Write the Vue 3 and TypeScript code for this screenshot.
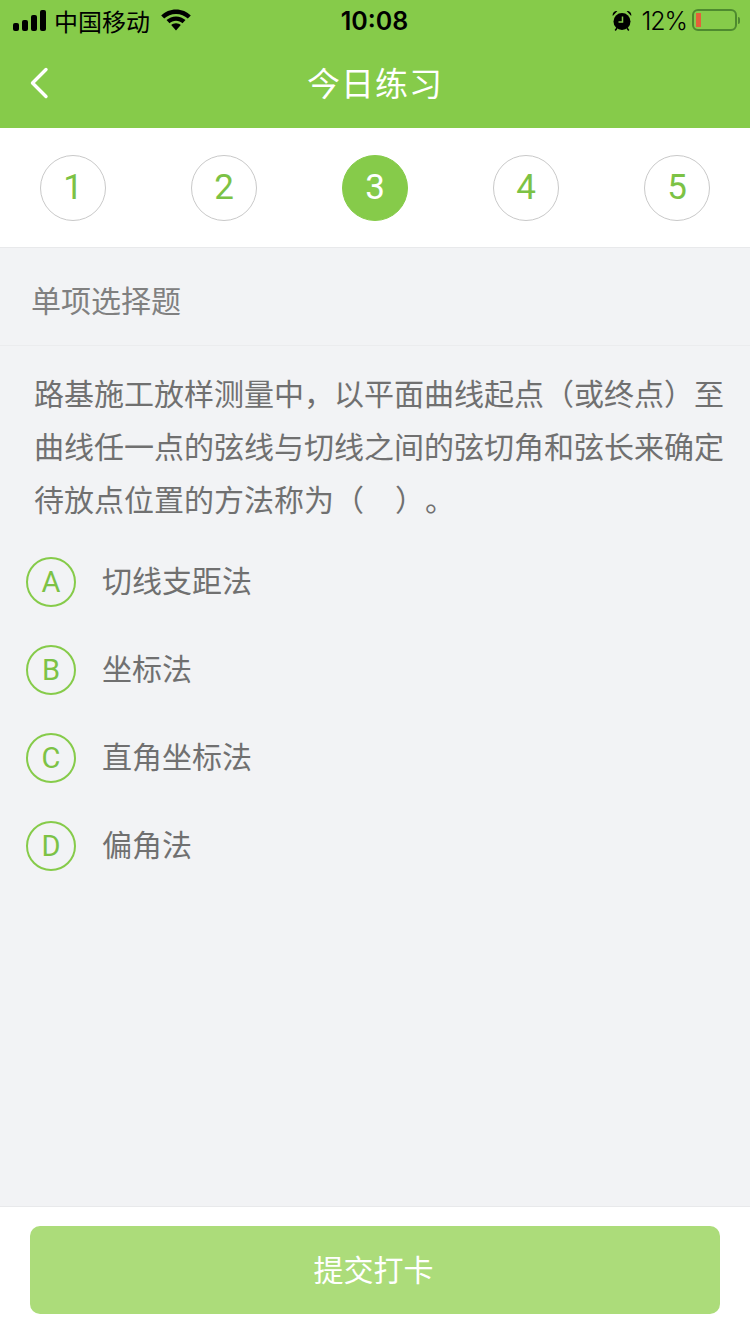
<script setup lang="ts">
const steps = [1, 2, 3, 4, 5]
const current = 3

const options = [
  { key: 'A', text: '切线支距法' },
  { key: 'B', text: '坐标法' },
  { key: 'C', text: '直角坐标法' },
  { key: 'D', text: '偏角法' }
]
</script>

<template>
  <div class="page">
    <header class="header">
      <div class="status-bar">
        <div class="status-left">
          <span class="signal"><i></i><i></i><i></i><i></i></span>
          <span class="carrier">中国移动</span>
          <svg class="wifi" width="30" height="22" viewBox="0 0 30 22">
            <path d="M15 .5C9.200.5 4 2.800.2 6.500l3 3.100C6.200 6.700 10.400 4.900 15 4.900s8.800 1.800 11.800 4.700l3-3.100C26 2.800 20.800.5 15 .5z" fill="#000" />
            <path d="M15 7.400c-3.700 0-7 1.400-9.500 3.700l3 3.100c1.700-1.600 4-2.500 6.500-2.500s4.800.9 6.500 2.500l3-3.100C22 8.800 18.700 7.400 15 7.400z" fill="#000" />
            <path d="M15 14.200c-1.900 0-3.500.7-4.800 1.900L15 21.500l4.800-5.400c-1.300-1.200-2.900-1.900-4.800-1.900z" fill="#000" />
          </svg>
        </div>
        <span class="time">10:08</span>
        <div class="status-right">
          <svg class="alarm" width="20" height="21" viewBox="0 0 20 21">
            <circle cx="10" cy="11.500" r="8.500" fill="#000" />
            <path d="M10.500 6.500v5.500H6.500" fill="none" stroke="#86cb4a" stroke-width="1.500" />
            <path d="M.8 6C.2 3 2.300.6 5.400 1zM19.200 6c.6-3-1.500-5.400-4.600-5z" fill="#000" />
            <path d="M5 18l-1.800 2.500M15 18l1.800 2.500" stroke="#000" stroke-width="1.500" />
          </svg>
          <span class="percent">12%</span>
          <span class="battery"><i class="level"></i></span>
          <span class="battery-cap"></span>
        </div>
      </div>
      <div class="nav-bar">
        <svg class="back" width="20" height="32" viewBox="0 0 20 32">
          <path d="M17 2.500 3.500 16 17 29.500" fill="none" stroke="#fff" stroke-width="3.400" stroke-linecap="round" stroke-linejoin="round" />
        </svg>
        <h1 class="title">今日练习</h1>
      </div>
    </header>

    <section class="steps">
      <div v-for="step in steps" :key="step" class="step" :class="{ active: step === current }">{{ step }}</div>
    </section>

    <main class="content">
      <div class="type">单项选择题</div>
      <p class="question">路基施工放样测量中，以平面曲线起点（或终点）至曲线任一点的弦线与切线之间的弦切角和弦长来确定待放点位置的方法称为（<span class="blank"></span>）。</p>
      <ul class="options">
        <li v-for="item in options" :key="item.key" class="option">
          <span class="letter">{{ item.key }}</span>
          <span class="option-text">{{ item.text }}</span>
        </li>
      </ul>
    </main>

    <footer class="footer">
      <button class="submit"><span class="submit-text">提交打卡</span></button>
    </footer>
  </div>
</template>

<style>
html,
body {
  margin: 0;
  background: #f2f3f5;
}
</style>

<style scoped>
.page {
  display: flex;
  flex-direction: column;
  width: 750px;
  height: 1334px;
  overflow: hidden;
  background: #f2f3f5;
  font-family: "Liberation Sans", "Noto Sans CJK SC", sans-serif;
}

.header {
  flex: none;
  height: 128px;
  background: #86cb4a;
}

.status-bar {
  display: grid;
  grid-template-columns: 1fr auto 1fr;
  align-items: center;
  height: 40px;
  padding: 0 10px 0 13px;
  color: #000;
}

.status-left,
.status-right {
  display: flex;
  align-items: center;
}

.status-right {
  justify-content: flex-end;
}

.signal {
  display: flex;
  align-items: flex-end;
  gap: 3px;
  height: 21px;
}

.signal i {
  width: 6px;
  border-radius: 2px;
  background: #000;
}

.signal i:nth-child(1) { height: 8px; }
.signal i:nth-child(2) { height: 11px; }
.signal i:nth-child(3) { height: 16px; }
.signal i:nth-child(4) { height: 21px; }

.carrier {
  margin-left: 8px;
  font-size: 24px;
}

.wifi {
  margin-left: 11px;
}

.time {
  margin-right: 4px;
  padding-top: 2px;
  font-size: 25px;
  font-weight: 600;
  font-family: Inter, "Liberation Sans", sans-serif;
}

.alarm {
  margin-right: 9px;
}

.percent {
  padding-top: 1px;
  font-size: 25px;
  font-weight: 300;
  font-family: Inter, "Liberation Sans", sans-serif;
  letter-spacing: -1px;
}

.battery {
  display: block;
  box-sizing: border-box;
  width: 45px;
  height: 22px;
  margin-left: 5px;
  padding: 2px;
  border: 2px solid #4e8a2f;
  border-radius: 6px;
}

.level {
  display: block;
  width: 5px;
  height: 100%;
  background: #e4603a;
}

.battery-cap {
  width: 2px;
  height: 7px;
  margin-left: 1px;
  border-radius: 0 2px 2px 0;
  background: #4e8a2f;
}

.nav-bar {
  position: relative;
  display: flex;
  align-items: center;
  justify-content: center;
  height: 88px;
}

.back {
  position: absolute;
  left: 29px;
  top: 27px;
}

.title {
  margin: 0;
  padding-bottom: 4px;
  color: #fff;
  font-size: 33px;
  font-weight: 400;
  letter-spacing: 1px;
}

.steps {
  flex: none;
  display: flex;
  justify-content: space-between;
  align-items: center;
  box-sizing: border-box;
  height: 120px;
  padding: 0 40px;
  background: #fff;
  border-bottom: 1px solid #e8e9eb;
}

.step {
  display: flex;
  align-items: center;
  justify-content: center;
  box-sizing: border-box;
  width: 66px;
  height: 66px;
  border: 1px solid #c9c9c9;
  border-radius: 50%;
  color: #7cc245;
  font-family: Roboto, "Liberation Sans", sans-serif;
  font-size: 35px;
}

.step.active {
  border-color: #86cb4a;
  background: #86cb4a;
  color: #fff;
}

.content {
  flex: 1;
}

.type {
  box-sizing: border-box;
  height: 98px;
  padding-left: 31px;
  border-bottom: 1px solid #ebecee;
  color: #808080;
  font-size: 30px;
  line-height: 107px;
}

.question {
  width: 692px;
  margin: 0;
  padding: 22px 0 0 34px;
  color: #707070;
  font-size: 30px;
  line-height: 53px;
  text-spacing-trim: space-all;
}

.blank {
  display: inline-block;
  width: 31px;
}

.options {
  margin: 0;
  padding: 30px 0 0 26px;
  list-style: none;
}

.option {
  display: flex;
  align-items: center;
  height: 50px;
  margin-bottom: 38px;
}

.letter {
  display: flex;
  align-items: center;
  justify-content: center;
  box-sizing: border-box;
  width: 50px;
  height: 50px;
  border: 2px solid #86cb4a;
  border-radius: 50%;
  color: #7cc245;
  font-family: Roboto, "Liberation Sans", sans-serif;
  font-size: 29px;
}

.option-text {
  margin-left: 26px;
  padding-bottom: 6px;
  color: #707070;
  font-size: 30px;
}

.footer {
  flex: none;
  box-sizing: border-box;
  height: 128px;
  padding: 19px 30px 0;
  background: #fff;
  border-top: 1px solid #e8e9eb;
}

.submit {
  display: block;
  width: 690px;
  height: 88px;
  padding: 0 3px 4px 0;
  border: none;
  border-radius: 10px;
  background: #acdc7a;
  color: #fff;
  font-family: inherit;
  font-size: 30px;
}
</style>
